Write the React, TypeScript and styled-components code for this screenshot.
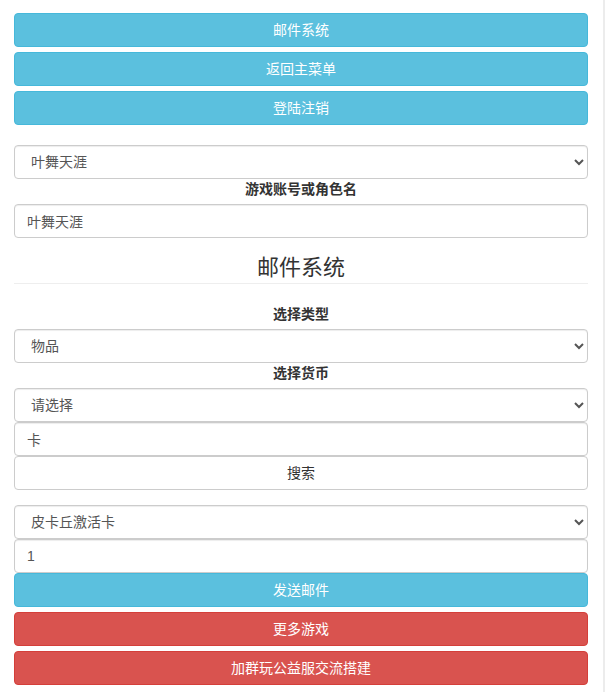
import React from 'react';
import styled, { createGlobalStyle } from 'styled-components';

const GlobalStyle = createGlobalStyle`
  html, body {
    margin: 0;
    padding: 0;
    background: #fff;
  }
  body {
    font-family: "Liberation Sans", Arial, "Noto Sans CJK SC", sans-serif;
    font-size: 14px;
    line-height: 1.42857143;
    color: #333;
  }
  * {
    box-sizing: border-box;
  }
`;

const Page = styled.div`
  width: 605px;
  min-height: 692px;
  padding: 13px 17px 0 14px;
  border-right: 2px solid #ececec;
`;

const Stack = styled.div`
  width: 574px;
  display: flex;
  flex-direction: column;
`;

const palette = {
  info: { bg: '#5bc0de', border: '#46b8da', color: '#fff' },
  danger: { bg: '#d9534f', border: '#d43f3a', color: '#fff' },
  default: { bg: '#fff', border: '#ccc', color: '#333' },
};

type Variant = keyof typeof palette;

const Button = styled.button<{ $variant: Variant; $gap?: number }>`
  display: block;
  width: 100%;
  height: 34px;
  margin-top: ${({ $gap }) => $gap ?? 0}px;
  padding: 6px 12px;
  font-family: inherit;
  font-size: 14px;
  line-height: 20px;
  text-align: center;
  border-radius: 4px;
  border: 1px solid ${({ $variant }) => palette[$variant].border};
  background: ${({ $variant }) => palette[$variant].bg};
  color: ${({ $variant }) => palette[$variant].color};
  cursor: pointer;
`;

const Select = styled.select<{ $gap?: number }>`
  display: block;
  width: 100%;
  height: 34px;
  margin-top: ${({ $gap }) => $gap ?? 0}px;
  padding: 6px 12px;
  font-family: inherit;
  font-size: 14px;
  line-height: 20px;
  color: #555;
  background: #fff;
  border: 1px solid #ccc;
  border-radius: 4px;
  box-shadow: inset 0 1px 1px rgba(0, 0, 0, 0.075);
`;

const Input = styled.input`
  display: block;
  width: 100%;
  height: 34px;
  padding: 6px 12px;
  font-family: inherit;
  font-size: 14px;
  line-height: 20px;
  color: #555;
  background: #fff;
  border: 1px solid #ccc;
  border-radius: 4px;
  box-shadow: inset 0 1px 1px rgba(0, 0, 0, 0.075);
  outline: none;
`;

const Label = styled.label<{ $gap?: number }>`
  display: block;
  margin: ${({ $gap }) => $gap ?? 0}px 0 5px;
  text-align: center;
  font-weight: bold;
  line-height: 20px;
`;

const Heading = styled.h3`
  margin: 17px 0 0;
  padding-bottom: 2px;
  font-size: 22px;
  font-weight: 400;
  line-height: 26px;
  text-align: center;
  color: #333;
  border-bottom: 1px solid #eee;
`;

export default function App() {
  return (
    <>
      <GlobalStyle />
      <Page>
        <Stack>
          <Button $variant="info">邮件系统</Button>
          <Button $variant="info" $gap={5}>返回主菜单</Button>
          <Button $variant="info" $gap={5}>登陆注销</Button>

          <Select $gap={20} defaultValue="叶舞天涯">
            <option>叶舞天涯</option>
          </Select>
          <Label>游戏账号或角色名</Label>
          <Input defaultValue="叶舞天涯" />

          <Heading>邮件系统</Heading>

          <Label $gap={20}>选择类型</Label>
          <Select defaultValue="物品">
            <option>物品</option>
          </Select>
          <Label>选择货币</Label>
          <Select defaultValue="请选择">
            <option>请选择</option>
          </Select>
          <Input defaultValue="卡" />
          <Button $variant="default">搜索</Button>

          <Select $gap={15} defaultValue="皮卡丘激活卡">
            <option>皮卡丘激活卡</option>
          </Select>
          <Input defaultValue="1" />
          <Button $variant="info">发送邮件</Button>
          <Button $variant="danger" $gap={5}>更多游戏</Button>
          <Button $variant="danger" $gap={5}>加群玩公益服交流搭建</Button>
        </Stack>
      </Page>
    </>
  );
}
